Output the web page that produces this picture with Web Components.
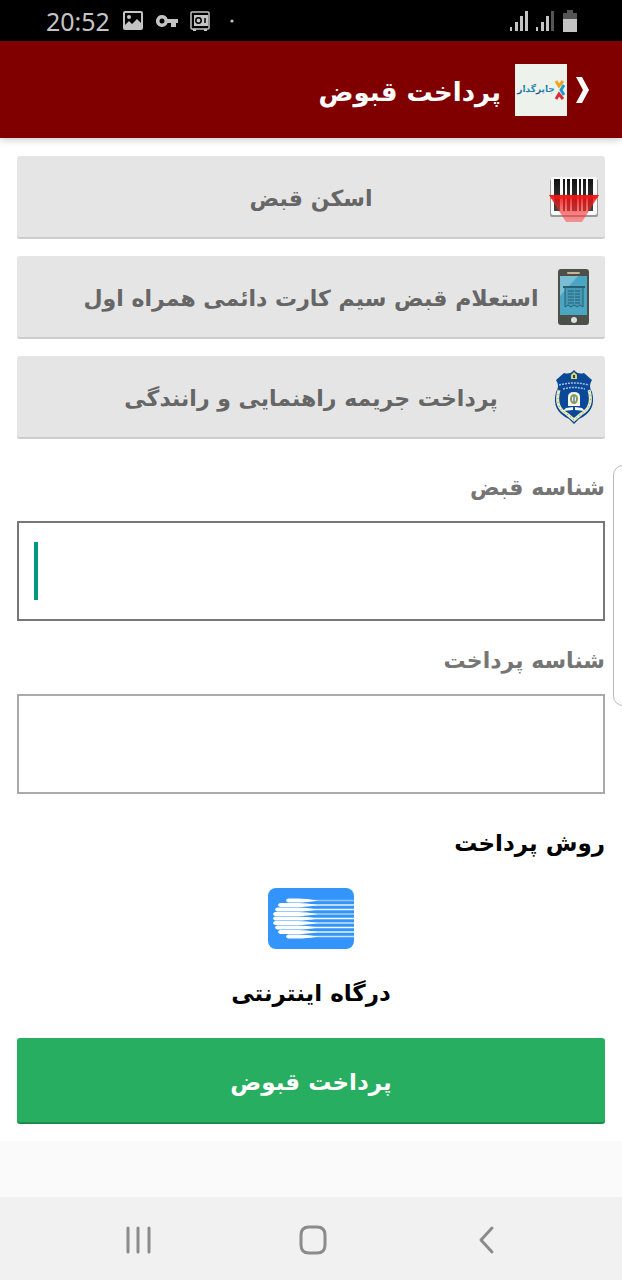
<!DOCTYPE html>
<html lang="fa" dir="rtl">
<head>
<meta charset="utf-8">
<meta name="viewport" content="width=device-width, initial-scale=1">
<title>پرداخت قبوض</title>
<style>
  body {
    margin: 0;
    background: #fafafa;
    font-family: "DejaVu Sans", "Noto Sans", sans-serif;
    font-size: 22px;
  }
</style>
</head>
<body>
<bill-app></bill-app>

<script>
class StatusBar extends HTMLElement {
  constructor() {
    super();
    this.attachShadow({ mode: 'open' });

    this.shadowRoot.innerHTML = `
      <style>
        :host {
          display: flex;
          direction: ltr;
          justify-content: space-between;
          align-items: center;
          height: 41px;
          padding: 0 44px 0 46px;
          background: #000;
          color: #c4c4c4;
          font: 25px/32px "Noto Sans", sans-serif;
        }

        div {
          display: flex;
          align-items: center;
        }

        .left { gap: 12px; }
        .right { gap: 8px; }

        svg { display: block; }
      </style>

      <div class="left">
        <span>20:52</span>
        <svg width="22" height="20" viewBox="0 0 22 20" fill="currentColor">
          <path fill-rule="evenodd" d="M3 0H19Q21 0 21 2V17Q21 19 19 19H3Q1 19 1 17V2Q1 0 3 0ZM3 2V14L7 10L10 13L15 8L19 12V2Z"/>
          <circle cx="7" cy="6" r="2"/>
        </svg>
        <svg width="22" height="14" viewBox="0 0 22 14" fill="currentColor">
          <path fill-rule="evenodd" d="M6 1A6 6 0 1 0 11.600 9H15V13H20V9H22V5H11.600A6 6 0 0 0 6 1ZM6 4.500A2.500 2.500 0 1 1 6 9.500A2.500 2.500 0 1 1 6 4.500Z"/>
        </svg>
        <svg width="20" height="20" viewBox="0 0 20 20" fill="none" stroke="currentColor" stroke-width="1.500">
          <rect x="1" y="1" width="18" height="17" rx="1"/>
          <path fill="currentColor" stroke="none" d="M4 4H18V15H4ZM3 18H6V20H3ZM14 18H17V20H14Z"/>
          <circle cx="8.500" cy="9.500" r="2.700" stroke="#000"/>
          <path stroke="#000" d="M15 7V12"/>
        </svg>
        <svg width="16" height="4" viewBox="0 0 16 4" fill="currentColor"><circle cx="10" cy="2" r="1.600"/></svg>
      </div>
      <div class="right">
        <svg width="18" height="20" viewBox="0 0 18 20" fill="currentColor">
          <path d="M0 16H2V20H0ZM5 11H8V20H5ZM10 5H13V20H10ZM15 0H18V20H15Z"/>
        </svg>
        <svg width="18" height="20" viewBox="0 0 18 20" fill="currentColor">
          <path d="M0 16H2V20H0ZM5 11H8V20H5ZM10 5H13V20H10Z"/>
          <path fill="#555" d="M15 0H18V20H15Z"/>
        </svg>
        <svg width="16" height="22" viewBox="0 0 16 22">
          <path fill="#555" d="M5 0H11V3H15V10H1V3H5Z"/>
          <path fill="#c4c4c4" d="M1 9H15V22H1Z"/>
        </svg>
      </div>
    `;
  }
}

class AppHeader extends HTMLElement {
  constructor() {
    super();
    this.attachShadow({ mode: 'open' });

    this.shadowRoot.innerHTML = `
      <style>
        :host {
          position: relative;
          display: flex;
          align-items: center;
          height: 97px;
          padding: 0 32px;
          background: #800000;
          color: #fff;
          box-shadow: 0 1px 8px rgba(0,0,0,0.25);
        }

        button {
          display: flex;
          align-items: center;
          gap: 8px;
          padding: 0;
          border: none;
          background: none;
          cursor: pointer;
        }

        svg { display: block; }

        h1 {
          margin: 0 14px;
          padding-top: 4px;
          font-size: 26px;
          line-height: 48px;
          font-weight: bold;
        }
      </style>

      <button aria-label="بازگشت">
        <svg width="15" height="26" viewBox="0 0 15 26" fill="#fff">
          <path d="M1 0H7L14 13L7 26H1L8 13Z"/>
        </svg>
        <svg width="52" height="52" viewBox="0 0 52 52">
          <defs>
            <linearGradient id="ink" x1="0" y1="0" x2="0" y2="1">
              <stop offset="0" stop-color="#0d5273"/>
              <stop offset="0.500" stop-color="#2b9cc4"/>
              <stop offset="1" stop-color="#123f72"/>
            </linearGradient>
          </defs>
          <rect width="52" height="52" fill="#eef2ec"/>
          <text x="21" y="28" text-anchor="middle" font-family="DejaVu Sans" font-size="9" font-weight="bold" fill="url(#ink)">جاپرگدار</text>
          <g fill="none" stroke-width="3">
            <path stroke="#eda51d" d="M41 17L44 22L48 17"/>
            <path stroke="#dc2938" d="M41 35L44 30L48 35"/>
            <path stroke="#249bc7" d="M49 21L46 26L49 31"/>
          </g>
        </svg>
      </button>
      <h1><slot></slot></h1>
    `;
  }
}

class ActionButton extends HTMLElement {
  constructor() {
    super();
    this.attachShadow({ mode: 'open' });

    this.shadowRoot.innerHTML = `
      <style>
        :host { display: block; }

        button {
          display: grid;
          grid-template-columns: 1fr auto 1fr;
          align-items: center;
          width: 100%;
          height: 83px;
          padding: 0 6px;
          border: none;
          border-bottom: 2px solid #cdcdcd;
          border-radius: 3px;
          background: #e5e5e5;
          color: #666;
          font: inherit;
          font-weight: bold;
          cursor: pointer;
        }

        .icon { justify-self: start; }
        .text { padding-top: 4px; }
      </style>

      <button>
        <span class="icon"><slot name="icon"></slot></span>
        <span class="text"><slot></slot></span>
      </button>
    `;
  }
}

class NumberField extends HTMLElement {
  constructor() {
    super();
    this.attachShadow({ mode: 'open' });

    this.shadowRoot.innerHTML = `
      <style>
        :host {
          display: block;
          --line: #aaa;
        }

        :host([active]) { --line: #777; }

        label {
          display: block;
          margin-bottom: 14px;
          color: #757575;
          font-weight: bold;
          line-height: 38px;
        }

        .box {
          position: relative;
          height: 100px;
        }

        input {
          box-sizing: border-box;
          width: 100%;
          height: 100%;
          padding: 0 17px;
          border: 2px solid var(--line);
          outline: none;
          background: #fff;
          direction: ltr;
          font: inherit;
          caret-color: #009982;
        }

        .caret { display: none; }

        :host([active]) .caret {
          display: block;
          position: absolute;
          left: 17px;
          top: 21px;
          bottom: 21px;
          width: 4px;
          background: #009982;
        }
      </style>

      <label for="value"><slot></slot></label>
      <div class="box">
        <input id="value" type="text" inputmode="numeric">
        <span class="caret"></span>
      </div>
    `;
  }

  connectedCallback() {
    this.input = this.shadowRoot.querySelector('input');

    // the drawn caret goes away once there is something typed
    this.input.addEventListener('input', () => {
      this.toggleAttribute('active', this.input.value === '');
    });
  }
}

class PaymentMethod extends HTMLElement {
  constructor() {
    super();
    this.attachShadow({ mode: 'open' });

    // left end, centre line and strength of each stripe
    const rows = [
      [18, 12.5, 0.45], [10, 17, 0.9], [7, 21.5, 0.9], [5, 26, 0.6], [5, 30.5, 1],
      [5, 35, 0.75], [7, 39.5, 0.95], [10, 44, 0.9], [18, 48.5, 0.75]
    ];
    const lines = rows.map(([x, y, o]) => `
      <path stroke="#fff" stroke-width="1.5" stroke-opacity="${o}" d="M30 ${y}H86"/>
      <path fill="#fff" d="M${x + 2} ${y - 2}Q${x - 2} ${y} ${x + 2} ${y + 2}H30Q38 ${y + 2} 50 ${y}Q38 ${y - 2} 30 ${y - 2}Z"/>
    `).join('');

    this.shadowRoot.innerHTML = `
      <style>
        :host {
          display: block;
          font-size: 23px;
        }

        h2 {
          margin: 0;
          font-size: inherit;
          line-height: 36px;
        }

        button {
          display: flex;
          flex-direction: column;
          align-items: center;
          gap: 26px;
          margin: 27px auto 0;
          padding: 0;
          border: none;
          background: none;
          color: #000;
          font: inherit;
          font-weight: bold;
          line-height: 36px;
          cursor: pointer;
        }

        svg { display: block; }
      </style>

      <h2><slot></slot></h2>
      <button>
        <svg width="86" height="61" viewBox="0 0 86 61">
          <rect width="86" height="61" rx="8" fill="#3395fb"/>
          ${lines}
        </svg>
        <slot name="option"></slot>
      </button>
    `;
  }
}

class PayButton extends HTMLElement {
  constructor() {
    super();
    this.attachShadow({ mode: 'open' });

    this.shadowRoot.innerHTML = `
      <style>
        :host {
          display: block;
          font-size: 23px;
        }

        button {
          width: 100%;
          height: 86px;
          padding: 4px 0 0;
          border: none;
          border-bottom: 2px solid #20894c;
          border-radius: 3px;
          background: #27ae60;
          color: #fff;
          font: inherit;
          font-weight: bold;
          cursor: pointer;
        }
      </style>

      <button><slot></slot></button>
    `;
  }
}

class NavBar extends HTMLElement {
  constructor() {
    super();
    this.attachShadow({ mode: 'open' });

    this.shadowRoot.innerHTML = `
      <style>
        :host {
          display: flex;
          direction: ltr;
          justify-content: center;
          align-items: center;
          gap: 142px;
          box-sizing: border-box;
          height: 83px;
          padding: 4px 0 0 4px;
          background: #f1f1f1;
        }

        button {
          padding: 0;
          border: none;
          background: none;
          cursor: pointer;
        }

        svg {
          display: block;
          fill: none;
          stroke: #8b8b8b;
          stroke-width: 3;
          stroke-linecap: round;
          stroke-linejoin: round;
        }
      </style>

      <button aria-label="برنامه‌های اخیر">
        <svg width="32" height="36" viewBox="0 0 32 36"><path d="M5 5V29M15 5V29M26 5V29"/></svg>
      </button>
      <button aria-label="خانه">
        <svg width="32" height="36" viewBox="0 0 32 36">
          <path d="M12 4H20Q28 4 28 12V22Q28 30 20 30H12Q4 30 4 22V12Q4 4 12 4Z"/>
        </svg>
      </button>
      <button aria-label="بازگشت">
        <svg width="32" height="36" viewBox="0 0 32 36"><path d="M21 5L10 17L21 29"/></svg>
      </button>
    `;
  }
}

class BillApp extends HTMLElement {
  constructor() {
    super();
    this.attachShadow({ mode: 'open' });

    this.shadowRoot.innerHTML = `
      <style>
        :host {
          position: relative;
          display: flex;
          flex-direction: column;
          min-height: 100vh;
          overflow: hidden;
        }

        main {
          display: flex;
          flex-direction: column;
          padding: 18px 17px 17px;
          background: #fff;
        }

        .actions {
          display: grid;
          gap: 17px;
          margin-bottom: 30px;
        }

        number-field { margin-bottom: 21px; }
        number-field + payment-method { margin-top: 10px; }
        pay-button { margin-top: 27px; }
        nav-bar { margin-top: auto; }

        svg { display: block; }

        .edge {
          position: absolute;
          right: -11px;
          top: 465px;
          width: 18px;
          height: 239px;
          border: 1px solid #bbb;
          border-radius: 10px;
          background: #fff;
        }
      </style>

      <status-bar></status-bar>
      <app-header>پرداخت قبوض</app-header>
      <main>
        <div class="actions">
          <action-button>
            <svg slot="icon" width="50" height="50" viewBox="0 0 50 50">
              <defs>
                <linearGradient id="bars" x1="0" y1="0" x2="0" y2="1">
                  <stop offset="0" stop-color="#111"/>
                  <stop offset="1" stop-color="#444"/>
                </linearGradient>
                <linearGradient id="beam" x1="0" y1="0" x2="0" y2="1">
                  <stop offset="0" stop-color="#e80808" stop-opacity="0.850"/>
                  <stop offset="1" stop-color="#f44" stop-opacity="0.500"/>
                </linearGradient>
              </defs>
              <rect x="1" y="7" width="48" height="38" rx="2" fill="#999"/>
              <rect x="2" y="5" width="46" height="38" rx="2" fill="#fafafa"/>
              <path fill="url(#bars)" d="M5 7H11V39H5ZM14 7H16V39H14ZM18 7H21V39H18ZM23 7H28V39H23ZM30 7H32V39H30ZM34 7H37V39H34ZM39 7H44V39H39Z"/>
              <path fill="url(#beam)" d="M0 23H50L33 50H17Z"/>
              <path fill="#fa1616" opacity="0.700" d="M0 23H50L47 27H3Z"/>
            </svg>
            اسکن قبض
          </action-button>
          <action-button>
            <svg slot="icon" width="50" height="56" viewBox="0 0 50 56">
              <rect x="9" width="31" height="56" rx="3" fill="#4d5049"/>
              <rect x="18" y="3" width="13" height="2" rx="1" fill="#c8b399"/>
              <rect x="11" y="7" width="27" height="39" fill="#4ba6c3"/>
              <path fill="#79bed4" d="M11 7H29L11 27Z"/>
              <path fill="#4599b5" stroke="#285f73" d="M16 18H34V38L31 36L28 38L25 36L22 38L19 36L16 38Z"/>
              <path stroke="#285f73" stroke-width="2" d="M14 18H36"/>
              <path stroke="#285f73" stroke-dasharray="6 1 5 2" d="M19 22H31M19 25H31M19 28H31M19 31H31M19 34H31"/>
              <circle cx="25" cy="51" r="3" fill="#ddd"/>
            </svg>
            استعلام قبض سیم کارت دائمی همراه اول
          </action-button>
          <action-button>
            <svg slot="icon" width="50" height="56" viewBox="0 0 50 56">
              <path fill="#0b4897" d="M25 1Q29 6 35 4L43 11Q39 17 43 23Q48 42 30 50L25 55L20 50Q2 42 7 23Q11 17 7 11L15 4Q21 6 25 1Z"/>
              <path fill="none" stroke="#e9edbd" stroke-width="3" d="M10 21Q5 38 18 45L25 51L32 45Q45 38 40 21"/>
              <path fill="none" stroke="#6d8f96" stroke-dasharray="1 3" d="M10 21Q5 38 18 45L25 51L32 45Q45 38 40 21"/>
              <path fill="none" stroke="#9fbbe0" stroke-width="1.500" stroke-dasharray="2 1" d="M10 16Q25 12 40 16M14 20Q25 17 36 20"/>
              <path fill="#e5d858" d="M22 10V6L25 3L28 6V10Z"/>
              <path fill="#0b4897" d="M24 6H26V9H24Z"/>
              <path fill="#f4f7e9" d="M19 37V28Q19 23 25 23Q31 23 31 28V37Z"/>
              <ellipse cx="25" cy="30" rx="3" ry="4" fill="none" stroke="#8b9857" stroke-width="2"/>
              <path fill="#f4f7fa" d="M17 39L24 38V41L14 42ZM33 39L26 38V41L36 42Z"/>
              <path stroke="#0b4897" d="M25 27V33"/>
            </svg>
            پرداخت جریمه راهنمایی و رانندگی
          </action-button>
        </div>
        <number-field active>شناسه قبض</number-field>
        <number-field>شناسه پرداخت</number-field>
        <payment-method>
          روش پرداخت
          <span slot="option">درگاه اینترنتی</span>
        </payment-method>
        <pay-button>پرداخت قبوض</pay-button>
      </main>
      <nav-bar></nav-bar>
      <div class="edge"></div>
    `;
  }
}

customElements.define('status-bar', StatusBar);
customElements.define('app-header', AppHeader);
customElements.define('action-button', ActionButton);
customElements.define('number-field', NumberField);
customElements.define('payment-method', PaymentMethod);
customElements.define('pay-button', PayButton);
customElements.define('nav-bar', NavBar);
customElements.define('bill-app', BillApp);
</script>
</body>
</html>
